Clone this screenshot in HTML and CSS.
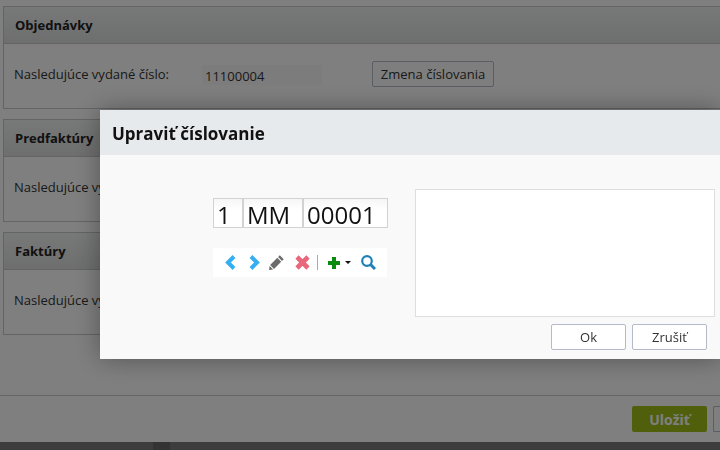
FILE: index.html
```html
<!DOCTYPE html>
<html lang="sk">
<head>
  <meta charset="UTF-8" />
  <meta name="viewport" content="width=device-width, initial-scale=1.0"/>
  <title>Číslovanie</title>
  <link rel="stylesheet" href="styles.css">
</head>
<body>
  <div class="page">
    <section class="panel">
      <h2 class="panel-head">Objednávky</h2>
      <div class="panel-body">
        <span class="label">Nasledujúce vydané číslo:</span>
        <span class="value">11100004</span>
        <button class="btn">Zmena číslovania</button>
      </div>
    </section>
    <section class="panel">
      <h2 class="panel-head">Predfaktúry</h2>
      <div class="panel-body">
        <span class="label">Nasledujúce vydané číslo:</span>
      </div>
    </section>
    <section class="panel">
      <h2 class="panel-head">Faktúry</h2>
      <div class="panel-body">
        <span class="label">Nasledujúce vydané číslo:</span>
      </div>
    </section>
    <div class="page-footer">
      <button class="btn-save">Uložiť</button>
      <button class="btn btn-next"></button>
    </div>
    <div class="status-bar"><span class="status-seg"></span></div>
  </div>

  <div class="overlay"></div>

  <div class="dialog">
    <div class="dialog-head">Upraviť číslovanie</div>
    <div class="dialog-body">
      <div class="format">
        <div class="cells">
          <span class="cell cell-s">1</span>
          <span class="cell cell-m">MM</span>
          <span class="cell cell-l">00001</span>
        </div>
        <div class="toolbar">
          <svg class="tool tool-prev" width="11" height="15" viewBox="0 0 11 15"><path d="M9 1.5 3 7.5l6 6" fill="none" stroke="#35aef2" stroke-width="4"/></svg>
          <svg class="tool tool-next" width="11" height="15" viewBox="0 0 11 15"><path d="M2 1.5 8 7.5l-6 6" fill="none" stroke="#35aef2" stroke-width="4"/></svg>
          <svg class="tool tool-edit" width="15" height="15" viewBox="0 0 15 15"><path d="M10.8.3 14.7 4.2 13 5.9 9.1 2ZM8.3 2.8 12.2 6.7 5 13.9 1.1 10ZM.6 10.9 4.1 14.4 0 15Z" fill="#6b6b6b"/></svg>
          <svg class="tool tool-del" width="15" height="15" viewBox="0 0 15 15"><path d="M2 2 13 13M13 2 2 13" fill="none" stroke="#e9677a" stroke-width="4.6"/></svg>
          <span class="tool-sep"></span>
          <svg class="tool tool-add" width="12" height="12" viewBox="0 0 12 12"><path d="M6 0v12M0 6h12" fill="none" stroke="#0b8a12" stroke-width="4"/></svg>
          <span class="caret"></span>
          <svg class="tool tool-find" width="15" height="15" viewBox="0 0 15 15"><circle cx="6" cy="6" r="4.8" fill="none" stroke="#1f7fb8" stroke-width="2.2"/><path d="M9.5 9.5 14 14" fill="none" stroke="#1f7fb8" stroke-width="3"/></svg>
        </div>
      </div>
      <div class="preview"></div>
    </div>
    <div class="dialog-foot">
      <button class="btn btn-dialog">Ok</button>
      <button class="btn btn-dialog">Zrušiť</button>
    </div>
  </div>
</body>
</html>
```

FILE: styles.css
```css
html, body {
  margin: 0;
  height: 100%;
  overflow: hidden;
}
body {
  font-family: "Open Sans", sans-serif;
  font-size: 13px;
  color: #333;
  background: #fff;
}
.page {
  width: 720px;
  height: 450px;
  padding: 6px 0 0 3px;
  box-sizing: border-box;
  display: flex;
  flex-direction: column;
  gap: 10px;
}
.panel {
  height: 103px;
  box-sizing: border-box;
  border: 1px solid #c8c8c8;
  border-right: 0;
}
.panel-head {
  margin: 0;
  height: 37px;
  box-sizing: border-box;
  padding-left: 11px;
  border-bottom: 1px solid #c8c8c8;
  background: linear-gradient(#f0f1f1, #dcddde);
  font-size: 13px;
  line-height: 36px;
  font-weight: 700;
  color: #222;
}
.panel-body {
  display: flex;
  align-items: center;
  height: 64px;
  padding: 0 0 5px 10px;
  box-sizing: border-box;
}
.label {
  width: 188px;
}
.value {
  width: 117px;
  height: 20px;
  padding-left: 3px;
  margin-top: 2px;
  line-height: 22px;
  background: #f8f8f8;
}
.btn {
  font-family: inherit;
  font-size: 13px;
  color: #333;
  background: #fff;
  border: 1px solid #b4bac8;
  border-radius: 2px;
  padding: 0;
  height: 26px;
}
.panel-body .btn {
  width: 122px;
  margin-left: 50px;
  background: #fdfdfd;
}
.page-footer {
  margin-left: -3px;
  margin-top: 50px;
  height: 47px;
  box-sizing: border-box;
  padding: 10px 0 0 632px;
  border-top: 1px solid #cccccc;
  display: flex;
  gap: 6px;
}
.btn-save {
  flex: none;
  width: 75px;
  height: 26px;
  padding: 0;
  border: 0;
  border-radius: 2px;
  background: #9fbe17;
  color: #fff;
  font-family: inherit;
  font-size: 14px;
  font-weight: 700;
}
.btn-next {
  flex: none;
  width: 7px;
  border-right: 0;
  border-radius: 2px 0 0 2px;
}
.status-bar {
  margin-left: -3px;
  margin-top: -10px;
  height: 8px;
  background: #7a7a7a;
}
.status-seg {
  display: block;
  width: 17px;
  height: 8px;
  margin-left: 153px;
  background: #666;
}
.overlay {
  position: fixed;
  top: 0;
  right: 0;
  bottom: 0;
  left: 0;
  background: rgba(0, 0, 0, .5);
}
.dialog {
  position: fixed;
  top: 110px;
  left: 100px;
  width: 620px;
  height: 249px;
  background: #f9f9f9;
  box-shadow: 0 0 24px rgba(0, 0, 0, .35);
}
.dialog-head {
  height: 45px;
  padding-left: 12px;
  background: #e7eaed;
  font-size: 17px;
  font-weight: 700;
  line-height: 48px;
  color: #111;
}
.dialog-body {
  display: flex;
  padding: 34px 5px 0 113px;
}
.format {
  width: 175px;
  margin-right: 27px;
  padding-top: 9px;
}
.cells {
  display: flex;
}
.cell {
  height: 30px;
  box-sizing: border-box;
  border: 1px solid #d2d2d2;
  padding-left: 3px;
  background: linear-gradient(#f6f6f6, #fff 40%);
  font-size: 24px;
  line-height: 31px;
  color: #111;
}
.cell-s { width: 30px; }
.cell-m { width: 60px; }
.cell-l { width: 85px; }
.toolbar {
  display: flex;
  align-items: center;
  height: 29px;
  margin-top: 20px;
  width: 174px;
  background: #fff;
}
.tool { flex: none; }
.tool-prev { margin-left: 12px; }
.tool-next { margin-left: 13px; }
.tool-edit { margin-left: 9px; }
.tool-del { margin-left: 11px; }
.tool-find { margin-left: 10px; }
.tool-sep {
  width: 1px;
  height: 15px;
  margin: 0 10px 0 7px;
  background: #aaa;
}
.caret {
  margin-left: 5px;
  border-top: 3px solid #111;
  border-left: 3px solid transparent;
  border-right: 3px solid transparent;
}
.preview {
  width: 300px;
  height: 128px;
  box-sizing: border-box;
  background: #fff;
  border: 1px solid #dedede;
}
.dialog-foot {
  display: flex;
  justify-content: flex-end;
  gap: 6px;
  padding: 7px 13px 0 0;
}
.btn-dialog {
  width: 75px;
}
```
